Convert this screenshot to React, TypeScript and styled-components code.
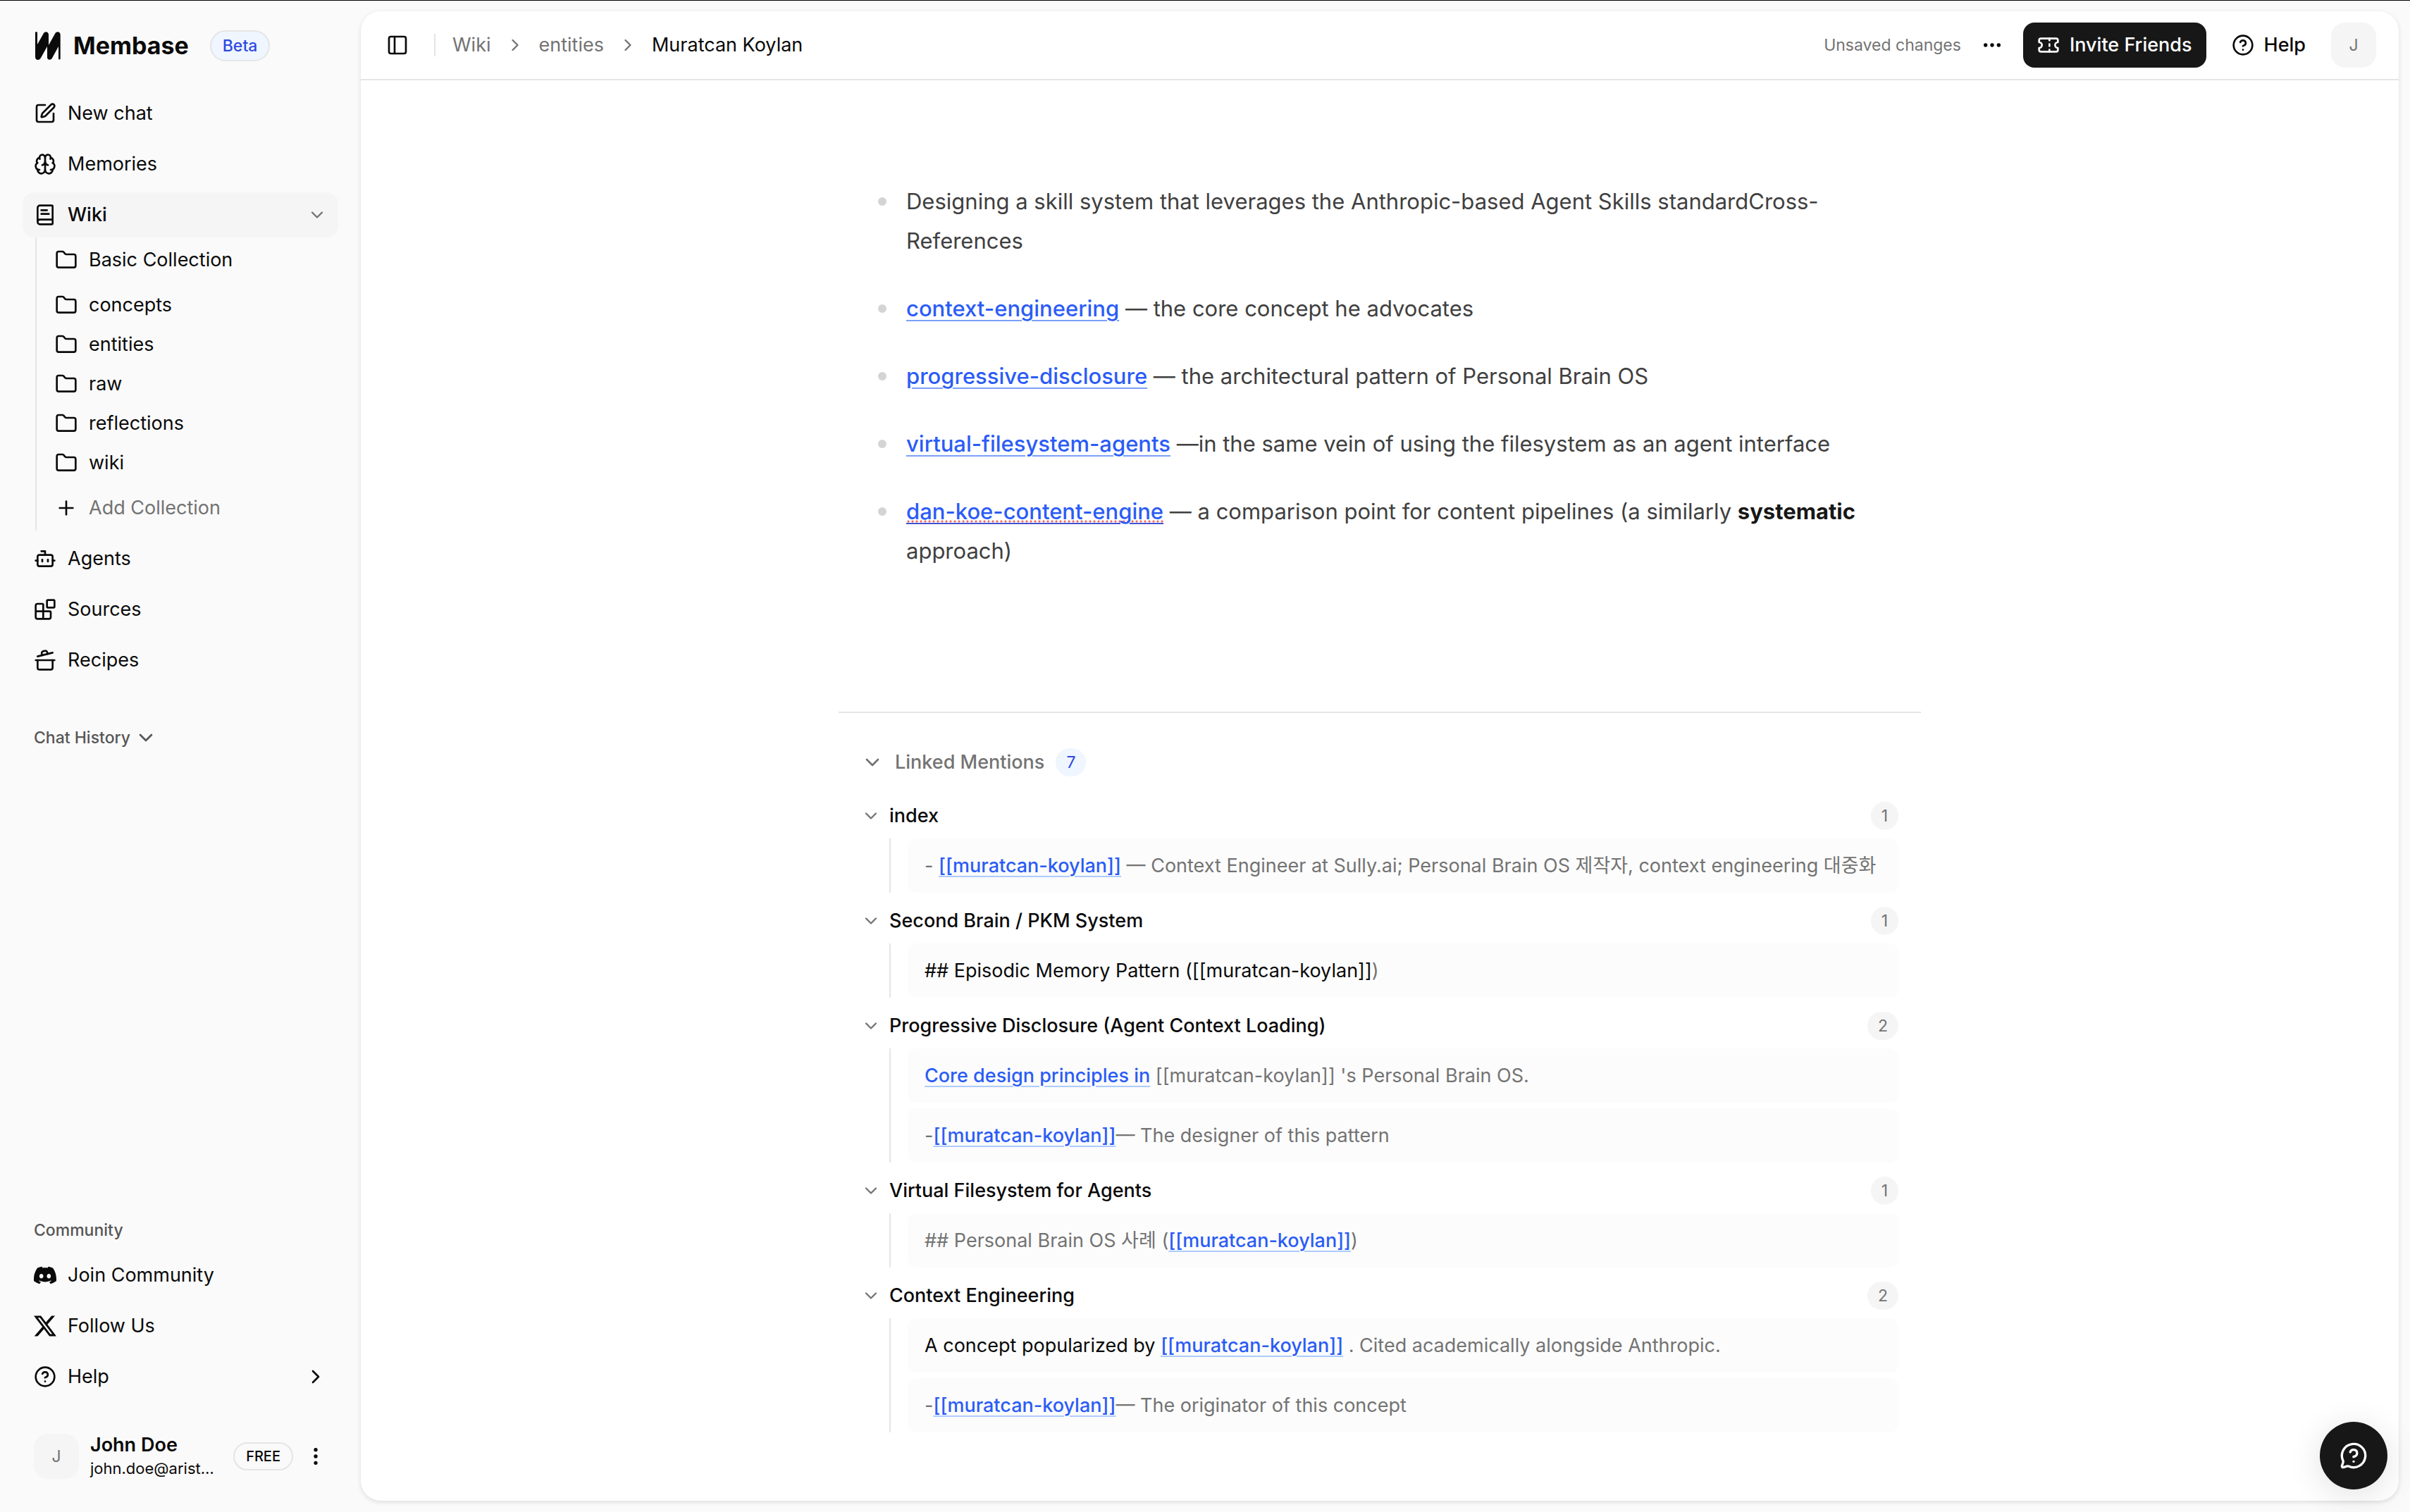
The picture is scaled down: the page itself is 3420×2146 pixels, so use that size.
import React from "react";
import styled, { createGlobalStyle, css } from "styled-components";
import {
  Blocks,
  BookText,
  Bot,
  Brain,
  ChevronDown,
  ChevronRight,
  CircleQuestionMark,
  CookingPot,
  Ellipsis,
  EllipsisVertical,
  Folder,
  MessageCircleQuestionMark,
  PanelLeft,
  Plus,
  SquarePen,
  Ticket,
} from "lucide-react";
import { SiDiscord, SiX } from "react-icons/si";

const color = {
  ink: "#0a0a0a",
  body: "#404040",
  muted: "#737373",
  label: "#565656",
  line: "#e5e5e5",
  soft: "#f5f5f5",
  page: "#fafafa",
  link: "#2b5cf6",
  dark: "#171717",
};

const GlobalStyle = createGlobalStyle`
  *, *::before, *::after { box-sizing: border-box; }
  body {
    margin: 0;
    background: ${color.page};
    color: ${color.ink};
    font-family: Inter, "Noto Sans CJK KR", sans-serif;
    font-size: 27px;
    line-height: 40px;
    -webkit-font-smoothing: antialiased;
  }
  button {
    margin: 0;
    padding: 0;
    border: 0;
    background: none;
    color: inherit;
    font: inherit;
    cursor: pointer;
  }
  a { color: inherit; text-decoration: none; }
  ul { margin: 0; padding: 0; list-style: none; }
  svg { display: block; flex-shrink: 0; }
`;

const Shell = styled.div`
  display: flex;
  height: 100vh;
  min-height: 1600px;
  border-top: 1px solid #000;
`;

/* Sidebar */

const Sidebar = styled.aside`
  display: flex;
  flex-direction: column;
  flex: 0 0 512px;
  padding: 32px 32px 46px;
`;

const Brand = styled.a`
  display: flex;
  align-items: center;
  height: 64px;
  margin-bottom: 32px;
  padding-left: 18px;
`;

const BrandName = styled.span`
  margin-left: 18px;
  font-size: 34px;
  font-weight: 700;
`;

const Pill = styled.span<{ $tone?: "blue" }>`
  display: inline-flex;
  align-items: center;
  height: 40px;
  padding: 0 16px;
  border: 2px solid ${color.line};
  border-radius: 22px;
  font-size: 20px;
  font-weight: 500;
  ${(p) =>
    p.$tone === "blue" &&
    css`
      height: 44px;
      margin-left: 30px;
      background: #eff6ff;
      color: #2f49e0;
      font-size: 23px;
    `}
`;

const NavList = styled.ul`
  display: flex;
  flex-direction: column;
  gap: 8px;
`;

const NavLink = styled.a<{ $active?: boolean }>`
  display: flex;
  align-items: center;
  gap: 16px;
  height: 64px;
  padding: 0 16px;
  border-radius: 16px;
  background: ${(p) => (p.$active ? color.soft : "transparent")};
  font-weight: ${(p) => (p.$active ? 500 : 400)};
  & > svg:nth-child(3) { margin-left: auto; }
`;

const SubList = styled.ul`
  margin-left: 18px;
  border-left: 2px solid ${color.line};
`;

const SubLink = styled.a<{ $tall?: boolean }>`
  display: flex;
  align-items: center;
  gap: 16px;
  height: ${(p) => (p.$tall ? 64 : 56)}px;
  padding-left: 26px;
`;

const FolderGroup = styled.ul`
  padding: 4px 0;
`;

const AddButton = styled.button`
  display: flex;
  align-items: center;
  gap: 16px;
  width: 100%;
  height: 64px;
  padding-left: 26px;
  & > span { color: ${color.muted}; }
`;

const SectionLabel = styled.button`
  display: flex;
  align-items: center;
  gap: 6px;
  height: 64px;
  margin-top: 46px;
  padding-left: 16px;
  color: ${color.label};
  font-size: 23px;
  font-weight: 500;
`;

const Bottom = styled.div`
  margin-top: auto;
`;

const GroupTitle = styled.h2`
  margin: 0;
  padding-left: 16px;
  color: ${color.label};
  font-size: 23px;
  font-weight: 500;
  line-height: 64px;
`;

const Account = styled.div`
  display: flex;
  align-items: center;
  gap: 16px;
  margin-top: 48px;
  padding: 0 16px;
`;

const Avatar = styled.span`
  display: flex;
  align-items: center;
  justify-content: center;
  flex: 0 0 64px;
  height: 64px;
  border-radius: 20px;
  background: ${color.soft};
  color: ${color.muted};
  font-size: 23px;
`;

const Identity = styled.div`
  flex: 1;
  min-width: 0;
  white-space: nowrap;
`;

const Name = styled.div`
  font-weight: 600;
  line-height: 34px;
`;

const Email = styled.div`
  font-size: 22px;
  line-height: 32px;
`;

/* Main panel */

const Panel = styled.main`
  display: flex;
  flex-direction: column;
  flex: 1;
  min-width: 0;
  margin: 15px 16px 16px 0;
  overflow: hidden;
  border-radius: 28px;
  background: #fff;
  box-shadow: 0 2px 6px rgba(0, 0, 0, 0.12);
`;

const TopBar = styled.header`
  display: flex;
  align-items: center;
  flex: 0 0 98px;
  padding: 0 32px 0 36px;
  border-bottom: 2px solid ${color.line};
`;

const Divider = styled.span`
  width: 2px;
  height: 32px;
  margin: 0 24px 0 36px;
  background: ${color.line};
`;

const Crumbs = styled.nav`
  display: flex;
  align-items: center;
  gap: 20px;
  color: ${color.muted};
  & > [aria-current] { color: ${color.ink}; }
`;

const Actions = styled.div`
  display: flex;
  align-items: center;
  margin-left: auto;
`;

const Status = styled.span`
  margin-right: 28px;
  color: ${color.muted};
  font-size: 23px;
`;

const ActionButton = styled.button<{ $solid?: boolean }>`
  display: flex;
  align-items: center;
  gap: 14px;
  height: 64px;
  padding: 0 20px;
  border-radius: 16px;
  background: ${(p) => (p.$solid ? color.dark : "transparent")};
  color: ${(p) => (p.$solid ? "#fff" : color.ink)};
  font-weight: 500;
  &:not(:last-of-type) { margin: 0 16px 0 28px; }
  &:last-of-type { margin-right: 16px; }
`;

const Scroll = styled.div`
  flex: 1;
  min-height: 0;
  overflow: hidden;
`;

const Column = styled.div`
  max-width: 1536px;
  margin: 0 auto;
`;

const Points = styled.ul`
  display: flex;
  flex-direction: column;
  gap: 40px;
  padding: 144px 80px 200px 56px;
  color: ${color.body};
  font-size: 31px;
  line-height: 56px;
`;

const Point = styled.li`
  display: flex;
  gap: 28px;
  &::before {
    content: "";
    flex: 0 0 12px;
    height: 12px;
    margin-top: 22px;
    border-radius: 50%;
    background: #d4d4d4;
  }
  strong { color: ${color.dark}; }
`;

const WikiLink = styled.a<{ $misspelt?: boolean }>`
  color: ${color.link};
  font-weight: 500;
  text-decoration: underline 2px #7ba0f7;
  text-underline-offset: 5px;
  ${(p) =>
    p.$misspelt &&
    css`
      background: radial-gradient(circle, #f0655c 1px, transparent 2px) left 0
        bottom 2px / 6px 4px repeat-x;
      text-decoration-color: #4053d6;
    `}
`;

const Mentions = styled.section`
  padding: 38px 32px 96px;
  border-top: 2px solid ${color.line};
`;

const MentionsToggle = styled.button`
  display: flex;
  align-items: center;
  gap: 16px;
  height: 64px;
  margin-bottom: 12px;
  color: ${color.muted};
  font-weight: 500;
`;

const Count = styled.span<{ $blue?: boolean }>`
  padding: 0 15px;
  border-radius: 20px;
  background: ${(p) => (p.$blue ? "#eff6ff" : color.soft)};
  color: ${(p) => (p.$blue ? "#2f49e0" : color.muted)};
  font-size: 23px;
  font-weight: 400;
  line-height: 40px;
`;

const Groups = styled.ul`
  display: flex;
  flex-direction: column;
  gap: 8px;
`;

const GroupToggle = styled.button`
  display: flex;
  align-items: center;
  gap: 12px;
  width: 100%;
  height: 64px;
  font-weight: 500;
  & > svg { color: ${color.muted}; }
  & > ${Count} { margin-left: auto; }
`;

const Snippets = styled.ul`
  display: flex;
  flex-direction: column;
  gap: 8px;
  margin-left: 40px;
  padding-left: 24px;
  border-left: 2px solid ${color.line};
`;

const Snippet = styled.li`
  padding: 16px 24px;
  border-radius: 12px;
  background: #fcfcfc;
  color: ${color.muted};
  line-height: 45px;
`;

const MentionLink = styled.a`
  color: ${color.link};
  font-weight: 500;
  text-decoration: underline 2px #aecbfd;
  text-underline-offset: 5px;
`;

const Strong = styled.span`
  color: ${color.ink};
`;

const HelpBubble = styled.button`
  position: fixed;
  right: 32px;
  bottom: 32px;
  display: flex;
  align-items: center;
  justify-content: center;
  width: 96px;
  height: 96px;
  border-radius: 50%;
  background: ${color.dark};
  color: #fff;
  box-shadow: 0 8px 48px rgba(0, 0, 0, 0.12);
`;

const Logo = () => (
  <svg width="36" height="40" viewBox="0 0 36 40" fill="currentColor" aria-hidden="true">
    <path d="M0 1.5A1.5 1.5 0 0 1 3 1.5V18L11.5 3C13-1 19-.5 19 4.5V19L28 3C29.5-1 35.7-.5 35.7 4.5V38.5A1.4 1.4 0 0 1 33 38.5V21L24.5 36.5C23 41 16.8 41 17 36V21L8 37C6 41.5 0 40.5 0 36Z" />
  </svg>
);

const self = <MentionLink href="#muratcan-koylan">[[muratcan-koylan]]</MentionLink>;

const mentions: { title: string; snippets: React.ReactNode[] }[] = [
  {
    title: "index",
    snippets: [
      <>- {self} — Context Engineer at Sully.ai; Personal Brain OS 제작자, context engineering 대중화</>,
    ],
  },
  {
    title: "Second Brain / PKM System",
    snippets: [
      <><Strong>## Episodic Memory Pattern ([[muratcan-koylan]]</Strong>)</>,
    ],
  },
  {
    title: "Progressive Disclosure (Agent Context Loading)",
    snippets: [
      <><MentionLink href="#core">Core design principles in</MentionLink> [[muratcan-koylan]] 's Personal Brain OS.</>,
      <>-{self}— The designer of this pattern</>,
    ],
  },
  {
    title: "Virtual Filesystem for Agents",
    snippets: [<>## Personal Brain OS 사례 ({self})</>],
  },
  {
    title: "Context Engineering",
    snippets: [
      <><Strong>A concept popularized by</Strong> {self} . Cited academically alongside Anthropic.</>,
      <>-{self}— The originator of this concept</>,
    ],
  },
];

const folders = ["concepts", "entities", "raw", "reflections", "wiki"];

function SideNav() {
  return (
    <Sidebar>
      <Brand href="#home">
        <Logo />
        <BrandName>Membase</BrandName>
        <Pill $tone="blue">Beta</Pill>
      </Brand>

      <nav aria-label="Main">
        <NavList>
          <li><NavLink href="#new"><SquarePen size={32} />New chat</NavLink></li>
          <li><NavLink href="#memories"><Brain size={32} />Memories</NavLink></li>
          <li>
            <NavLink href="#wiki" $active>
              <BookText size={32} />
              <span>Wiki</span>
              <ChevronDown size={28} color={color.muted} />
            </NavLink>
            <SubList>
              <li><SubLink href="#basic" $tall><Folder size={32} />Basic Collection</SubLink></li>
              <li>
                <FolderGroup>
                  {folders.map((name) => (
                    <li key={name}>
                      <SubLink href={`#${name}`}><Folder size={32} />{name}</SubLink>
                    </li>
                  ))}
                </FolderGroup>
              </li>
              <li><AddButton><Plus size={32} /><span>Add Collection</span></AddButton></li>
            </SubList>
          </li>
          <li><NavLink href="#agents"><Bot size={32} />Agents</NavLink></li>
          <li><NavLink href="#sources"><Blocks size={32} />Sources</NavLink></li>
          <li><NavLink href="#recipes"><CookingPot size={32} />Recipes</NavLink></li>
        </NavList>
      </nav>

      <SectionLabel>Chat History <ChevronDown size={32} /></SectionLabel>

      <Bottom>
        <GroupTitle>Community</GroupTitle>
        <NavList>
          <li><NavLink href="#join"><SiDiscord size={32} />Join Community</NavLink></li>
          <li><NavLink href="#follow"><SiX size={32} />Follow Us</NavLink></li>
          <li>
            <NavLink href="#help">
              <CircleQuestionMark size={32} />
              <span>Help</span>
              <ChevronRight size={32} />
            </NavLink>
          </li>
        </NavList>
        <Account>
          <Avatar>J</Avatar>
          <Identity>
            <Name>John Doe</Name>
            <Email>john.doe@arist…</Email>
          </Identity>
          <Pill>FREE</Pill>
          <button aria-label="Account menu"><EllipsisVertical size={32} /></button>
        </Account>
      </Bottom>
    </Sidebar>
  );
}

function Header() {
  return (
    <TopBar>
      <button aria-label="Toggle sidebar"><PanelLeft size={32} /></button>
      <Divider />
      <Crumbs aria-label="Breadcrumb">
        <a href="#wiki">Wiki</a>
        <ChevronRight size={28} />
        <a href="#entities">entities</a>
        <ChevronRight size={28} />
        <span aria-current="page">Muratcan Koylan</span>
      </Crumbs>
      <Actions>
        <Status>Unsaved changes</Status>
        <button aria-label="More"><Ellipsis size={32} /></button>
        <ActionButton $solid><Ticket size={32} />Invite Friends</ActionButton>
        <ActionButton><CircleQuestionMark size={32} />Help</ActionButton>
        <Avatar>J</Avatar>
      </Actions>
    </TopBar>
  );
}

export default function App() {
  return (
    <>
      <GlobalStyle />
      <Shell>
        <SideNav />
        <Panel>
          <Header />
          <Scroll>
            <Column>
              <Points>
                <Point>
                  <div>
                    Designing a skill system that leverages the Anthropic-based Agent Skills
                    standardCross-References
                  </div>
                </Point>
                <Point>
                  <div><WikiLink href="#ce">context-engineering</WikiLink> — the core concept he advocates</div>
                </Point>
                <Point>
                  <div><WikiLink href="#pd">progressive-disclosure</WikiLink> — the architectural pattern of Personal Brain OS</div>
                </Point>
                <Point>
                  <div><WikiLink href="#vfa">virtual-filesystem-agents</WikiLink> —in the same vein of using the filesystem as an agent interface</div>
                </Point>
                <Point>
                  <div>
                    <WikiLink href="#dk" $misspelt>dan-koe-content-engine</WikiLink> — a comparison
                    point for content pipelines (a similarly <strong>systematic</strong> approach)
                  </div>
                </Point>
              </Points>
              <Mentions>
                <MentionsToggle>
                  <ChevronDown size={32} />
                  Linked Mentions
                  <Count $blue>7</Count>
                </MentionsToggle>
                <Groups>
                  {mentions.map((group) => (
                    <li key={group.title}>
                      <GroupToggle>
                        <ChevronDown size={28} />
                        {group.title}
                        <Count>{group.snippets.length}</Count>
                      </GroupToggle>
                      <Snippets>
                        {group.snippets.map((snippet, i) => (
                          <Snippet key={i}>{snippet}</Snippet>
                        ))}
                      </Snippets>
                    </li>
                  ))}
                </Groups>
              </Mentions>
            </Column>
          </Scroll>
        </Panel>
        <HelpBubble aria-label="Open support chat"><MessageCircleQuestionMark size={40} /></HelpBubble>
      </Shell>
    </>
  );
}
